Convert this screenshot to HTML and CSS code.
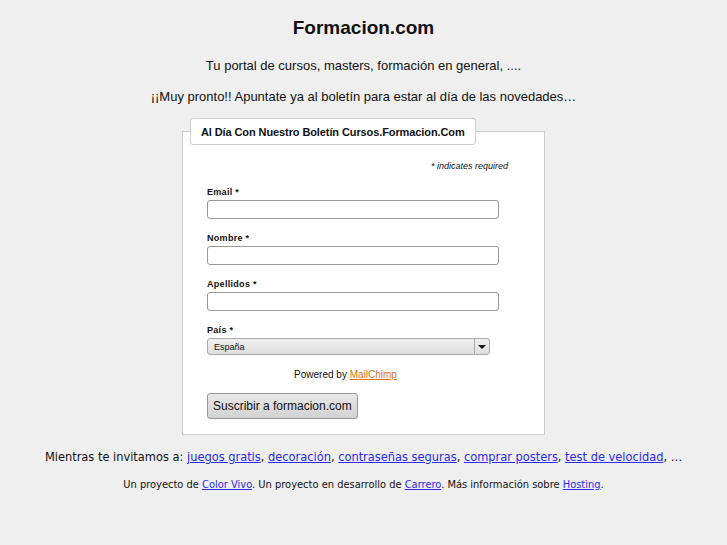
FILE: index.html
```html
<!DOCTYPE html>
<html lang="es">
<head>
    <meta charset="UTF-8">
    <title>Formacion.com</title>
    <link rel="stylesheet" href="styles.css">
</head>
<body>

<h1>Formacion.com</h1>
<p class="intro">Tu portal de cursos, masters, formación en general, ....</p>
<p class="intro">¡¡Muy pronto!! Apuntate ya al boletín para estar al día de las novedades…</p>

<form class="signup">
    <fieldset>
        <legend>Al Día Con Nuestro Boletín Cursos.Formacion.Com</legend>
        <div class="required">* indicates required</div>

        <label>Email *</label>
        <input type="text" class="field">

        <label>Nombre *</label>
        <input type="text" class="field">

        <label>Apellidos *</label>
        <input type="text" class="field">

        <label>País *</label>
        <div class="select">
            <span>España</span>
            <span class="arrow"></span>
        </div>

        <div class="powered">Powered by <a href="#">MailChimp</a></div>

        <button type="button">Suscribir a formacion.com</button>
    </fieldset>
</form>

<p class="links">Mientras te invitamos a: <a href="#">juegos gratis</a>, <a href="#">decoración</a>, <a href="#">contraseñas seguras</a>, <a href="#">comprar posters</a>, <a href="#">test de velocidad</a>, …</p>
<p class="credits">Un proyecto de <a href="#">Color Vivo</a>. Un proyecto en desarrollo de <a href="#">Carrero</a>. Más información sobre <a href="#">Hosting</a>.</p>

</body>
</html>
```

FILE: styles.css
```css
body {
    font-family: "Liberation Sans", Arial, sans-serif;
    background-color: #efefef;
    color: #111;
    margin: 0;
    padding: 0;
    text-align: center;
}
h1 {
    font-size: 19px;
    margin: 17px 0 19px;
}
.intro {
    font-size: 13px;
    margin: 0 0 16px;
}
.intro + .intro {
    margin-bottom: 14px;
}
.signup {
    width: 363px;
    margin: 0 auto;
    text-align: left;
}
fieldset {
    background: white;
    border: 1px solid #ccc;
    margin: 0;
    padding: 0 0 15px 24px;
}
legend {
    font-weight: bold;
    font-size: 11px;
    letter-spacing: -0.1px;
    background: white;
    border: 1px solid #ccc;
    border-radius: 3px;
    padding: 7px 10px 6px;
    margin-left: -17px;
}
.required {
    font-style: italic;
    font-size: 9px;
    text-align: right;
    margin: 16px 36px 16px 0;
}
label {
    display: block;
    font-weight: bold;
    font-size: 9px;
    letter-spacing: 0.3px;
    margin-bottom: 3px;
}
.field {
    display: block;
    width: 292px;
    height: 19px;
    box-sizing: border-box;
    border: 1px solid #999;
    border-radius: 3px;
    margin: 0 0 14px;
    background: white;
}
.select {
    display: flex;
    justify-content: space-between;
    align-items: center;
    width: 283px;
    height: 17px;
    box-sizing: border-box;
    border: 1px solid #aaa;
    border-radius: 3px;
    background: linear-gradient(#f0f0f0, #dedede);
    font-size: 9px;
    padding-left: 6px;
}
.arrow {
    width: 14px;
    height: 15px;
    border-left: 1px solid #aaa;
    position: relative;
}
.arrow::after {
    content: "";
    position: absolute;
    left: 3px;
    top: 6px;
    border-left: 4px solid transparent;
    border-right: 4px solid transparent;
    border-top: 4px solid #111;
}
.powered {
    font-size: 10px;
    text-align: center;
    margin: 14px 60px 13px 0;
}
.powered a {
    color: #e07010;
}
button {
    font-family: "Liberation Sans", Arial, sans-serif;
    font-size: 12px;
    color: #111;
    height: 26px;
    padding: 0 5px;
    border: 1px solid #999;
    border-radius: 3px;
    background: linear-gradient(#e8e8e8, #d2d2d2);
}
.links {
    font-family: "DejaVu Sans Condensed", sans-serif;
    font-size: 12.7px;
    margin: 14px 0 14px;
}
.credits {
    font-family: "DejaVu Sans Condensed", sans-serif;
    font-size: 11px;
    margin: 0;
}
a {
    color: #2a2aee;
}
```
